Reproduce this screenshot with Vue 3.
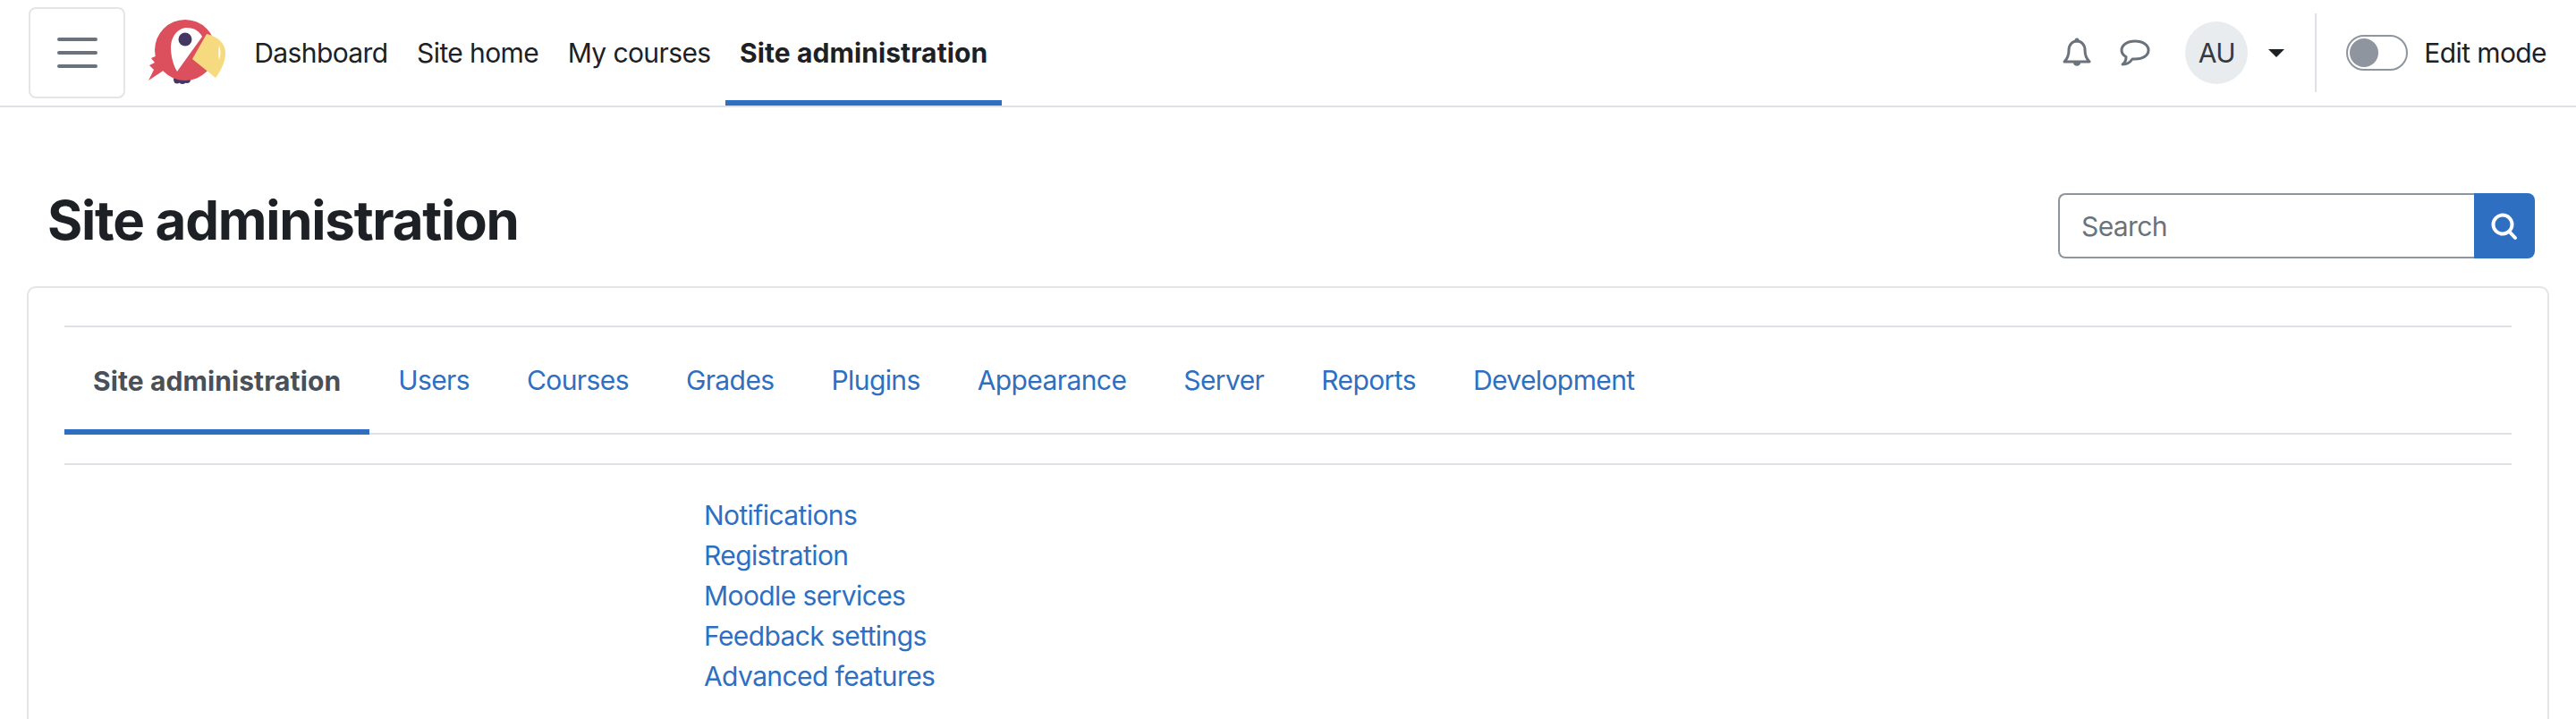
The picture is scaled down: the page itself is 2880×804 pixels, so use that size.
<script setup>
const navItems = [
  { label: 'Dashboard' },
  { label: 'Site home' },
  { label: 'My courses' },
  { label: 'Site administration', active: true },
]
const tabs = ['Site administration', 'Users', 'Courses', 'Grades', 'Plugins', 'Appearance', 'Server', 'Reports', 'Development']
const links = ['Notifications', 'Registration', 'Moodle services', 'Feedback settings', 'Advanced features']
</script>

<template>
  <div class="page">
    <header class="navbar">
      <button class="menu-btn" aria-label="Menu">
        <span></span><span></span><span></span>
      </button>
      <svg class="logo" viewBox="160 15 100 90" width="100" height="90" aria-label="Logo">
        <ellipse cx="198" cy="90" rx="4" ry="4.500" fill="#443763" />
        <ellipse cx="204" cy="91" rx="4" ry="4" fill="#443763" />
        <ellipse cx="209" cy="90" rx="4" ry="4" fill="#443763" />
        <path d="M176 63 L169 66 L173 71 L167 74 L172 79 L166 91 L184 79 Z" fill="#dc4f5c" />
        <circle cx="207" cy="57" r="34" fill="#dc4f5c" />
        <path d="M198 81 C193 73 191 62 191 54 C191 42 199 32 209 32 C217 32 223 36 226 42 Z" fill="#fff" />
        <circle cx="207" cy="45" r="7.500" fill="#443763" />
        <path d="M231 39 C244 42 252 50 252 60 C252 70 247 80 241 88 L215 67 Z" fill="#f6da7f" />
        <path d="M245 52 C247 57 247 62 245 68 C244 62 244 57 245 52 Z" fill="#fff" />
      </svg>
      <nav class="primary-nav">
        <a v-for="item in navItems" :key="item.label" class="nav-item" :class="{ active: item.active }">{{ item.label }}</a>
      </nav>
      <div class="nav-right">
        <svg class="bell" viewBox="0 0 32 34" width="32" height="34" aria-label="Notifications">
          <path d="M2 27 C6 23 7 19 7 14 C7 8 11 4 16 4 C21 4 25 8 25 14 C25 19 26 23 30 27 Z" fill="none" stroke="#6a737b" stroke-width="3" stroke-linejoin="round" />
          <path d="M12 28 C12 33 20 33 20 28 Z" fill="#6a737b" />
          <circle cx="16" cy="3" r="2.500" fill="#6a737b" />
        </svg>
        <svg class="chat" viewBox="0 0 34 30" width="34" height="30" aria-label="Messages">
          <path d="M17 2 C8 2 2 6.500 2 12 C2 15 4 18 7 19.500 C7 23 6 26 3 28 C8 28 12 25 14 22 C15 22 16 22 17 22 C26 22 32 18 32 12 C32 6.500 26 2 17 2 Z" fill="none" stroke="#6a737b" stroke-width="3" stroke-linejoin="round" />
        </svg>
        <div class="avatar">AU</div>
        <span class="caret"></span>
        <span class="divider"></span>
        <span class="toggle"><span class="knob"></span></span>
        <span class="edit-label">Edit mode</span>
      </div>
    </header>

    <div class="page-head">
      <h1 class="title">Site administration</h1>
      <form class="search" @submit.prevent>
        <input class="search-input" type="text" placeholder="Search" />
        <button class="search-btn" aria-label="Search">
          <svg viewBox="0 0 32 34" width="32" height="34">
            <circle cx="14" cy="15" r="10.500" fill="none" stroke="#fff" stroke-width="4" />
            <line x1="21.500" y1="23" x2="28" y2="30" stroke="#fff" stroke-width="4" stroke-linecap="round" />
          </svg>
        </button>
      </form>
    </div>

    <main class="card">
      <div class="tabs">
        <a v-for="(tab, i) in tabs" :key="tab" class="tab" :class="{ current: i === 0 }">{{ tab }}</a>
      </div>
      <div class="content">
        <div class="spacer"></div>
        <ul class="links">
          <li v-for="link in links" :key="link"><a>{{ link }}</a></li>
        </ul>
      </div>
    </main>
  </div>
</template>

<style>
html, body { margin: 0; background: #fff; overflow: hidden; }
</style>

<style scoped>
.page {
  width: 2880px;
  height: 804px;
  overflow: hidden;
  font-family: Inter, "Liberation Sans", sans-serif;
  font-size: 30px;
  line-height: 45px;
  letter-spacing: -0.6px;
  color: #1d2125;
  background: #fff;
}
.navbar {
  display: flex;
  align-items: center;
  height: 118px;
  padding-left: 32px;
  padding-right: 33px;
  border-bottom: 2px solid #dee2e6;
}
.menu-btn {
  width: 108px;
  height: 102px;
  padding: 0;
  background: #fff;
  border: 2px solid #e3e5e7;
  border-radius: 8px;
  display: flex;
  flex-direction: column;
  align-items: center;
  justify-content: center;
  gap: 11px;
  box-sizing: border-box;
}
.menu-btn span {
  display: block;
  width: 45px;
  height: 4px;
  background: #6a737b;
  border-radius: 2px;
}
.logo { margin-left: 20px; flex: none; }
.primary-nav { display: flex; align-self: stretch; margin-left: 8px; }
.nav-item {
  display: flex;
  align-items: center;
  padding: 0 16.250px;
  border-bottom: 6px solid transparent;
  border-top: 6px solid transparent;
  color: #1d2125;
}
.nav-item.active {
  font-weight: 700;
  letter-spacing: 0.1px;
  border-bottom-color: #2f6fc1;
}
.nav-right {
  margin-left: auto;
  display: flex;
  align-items: center;
}
.bell { margin-right: 32px; }
.chat { margin-right: 39px; }
.avatar {
  width: 70px;
  height: 70px;
  border-radius: 50%;
  background: #e9ecef;
  color: #343a40;
  display: flex;
  align-items: center;
  justify-content: center;
  margin-right: 23px;
}
.caret {
  width: 0;
  height: 0;
  border-left: 9px solid transparent;
  border-right: 9px solid transparent;
  border-top: 9px solid #1d2125;
  margin-right: 34px;
}
.divider {
  width: 2px;
  height: 88px;
  background: #dee2e6;
  margin-right: 33px;
}
.toggle {
  width: 69px;
  height: 40px;
  box-sizing: border-box;
  border: 2px solid #8f959e;
  border-radius: 20px;
  display: flex;
  align-items: center;
  padding-left: 2px;
  margin-right: 18px;
}
.knob {
  width: 32px;
  height: 32px;
  border-radius: 50%;
  background: #8f959e;
}
.page-head {
  display: flex;
  align-items: flex-start;
  justify-content: space-between;
  padding: 96px 46px 31px 53px;
}
.title {
  margin: 0;
  font-size: 60px;
  font-weight: 700;
  line-height: 60px;
  letter-spacing: -1.26px;
  color: #1d2125;
}
.search { display: flex; height: 73px; width: 533px; }
.search-input {
  flex: 1;
  min-width: 0;
  box-sizing: border-box;
  height: 73px;
  border: 2px solid #8f959e;
  border-right: 0;
  border-radius: 8px 0 0 8px;
  padding: 0 24px;
  font: inherit;
  letter-spacing: inherit;
  color: #1d2125;
  outline: none;
}
.search-input::placeholder { color: #6a737b; opacity: 1; }
.search-btn {
  width: 68px;
  flex: none;
  border: 0;
  padding: 0;
  background: #2f6fc1;
  border-radius: 0 8px 8px 0;
  display: flex;
  align-items: center;
  justify-content: center;
}
.card {
  margin: 0 30px;
  border: 2px solid #e3e5e7;
  border-radius: 10px;
  padding: 42px 40px 40px;
  min-height: 700px;
  box-sizing: border-box;
}
.tabs {
  display: flex;
  height: 118px;
  border-top: 2px solid #dee2e6;
  border-bottom: 2px solid #dee2e6;
}
.tab {
  display: flex;
  align-items: center;
  padding: 0 32px;
  color: #2f6fc1;
}
.tab.current {
  font-weight: 700;
  letter-spacing: 0.1px;
  color: #495057;
  box-shadow: inset 0 -6px 0 #2f6fc1;
  margin-bottom: -2px;
}
.content {
  margin-top: 32px;
  padding-top: 34px;
  border-top: 2px solid #dee2e6;
  display: flex;
}
.spacer { width: 715px; flex: none; }
.links { list-style: none; margin: 0; padding: 0; color: #2f6fc1; }
</style>
